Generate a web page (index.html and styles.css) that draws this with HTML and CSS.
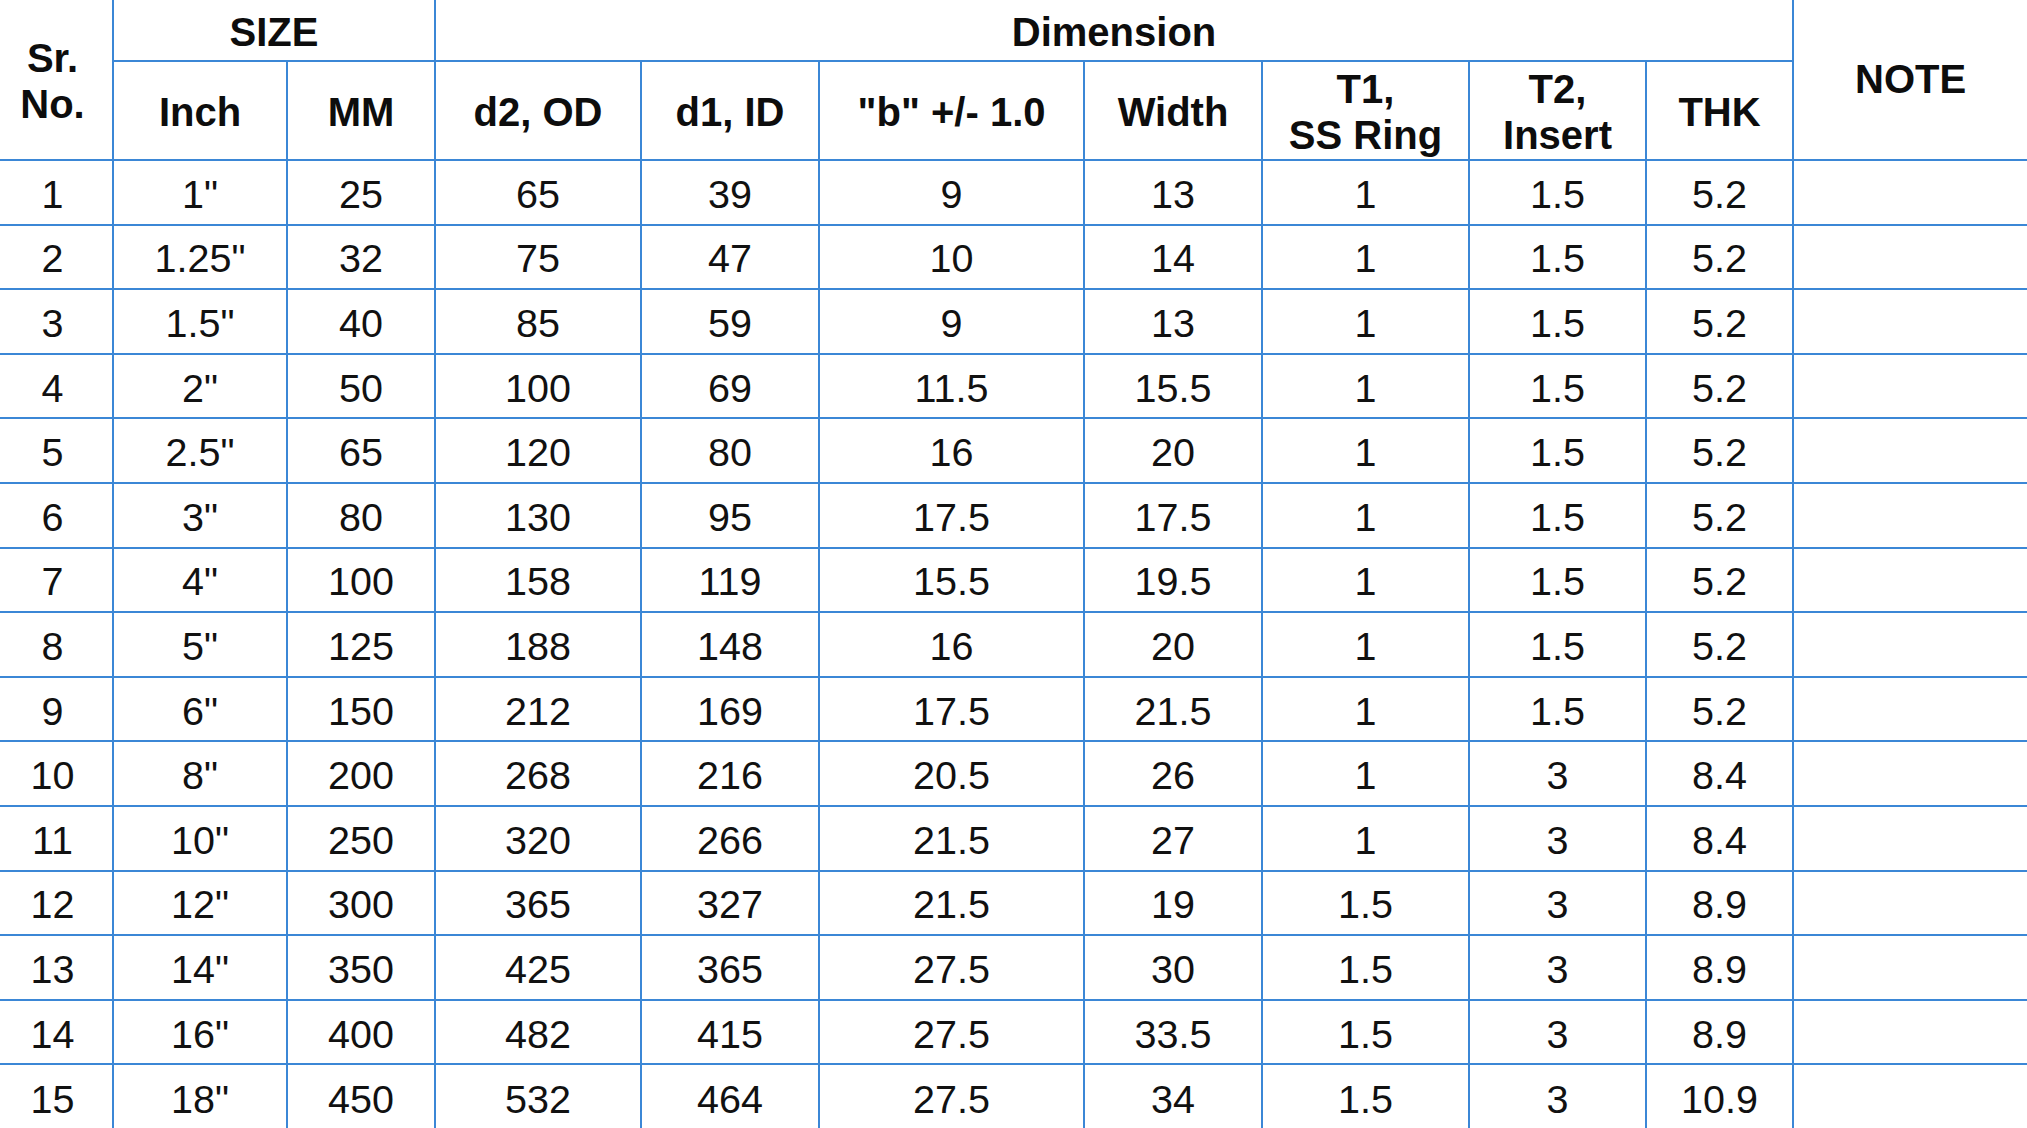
FILE: index.html
```html
<!DOCTYPE html>
<html lang="en">
<head>
<meta charset="utf-8">
<title>Gasket Dimension Table</title>
<link rel="stylesheet" href="styles.css">
</head>
<body>
<table class="spec">
  <colgroup>
    <col class="c-sr">
    <col class="c-inch">
    <col class="c-mm">
    <col class="c-d2">
    <col class="c-d1">
    <col class="c-b">
    <col class="c-width">
    <col class="c-t1">
    <col class="c-t2">
    <col class="c-thk">
    <col class="c-note">
  </colgroup>
  <thead>
    <tr class="h-top">
      <th rowspan="2" class="sr">Sr.<br>No.</th>
      <th colspan="2">SIZE</th>
      <th colspan="7">Dimension</th>
      <th rowspan="2" class="note">NOTE</th>
    </tr>
    <tr class="h-sub">
      <th>Inch</th>
      <th>MM</th>
      <th>d2, OD</th>
      <th>d1, ID</th>
      <th>&quot;b&quot; +/- 1.0</th>
      <th>Width</th>
      <th>T1,<br>SS Ring</th>
      <th>T2,<br>Insert</th>
      <th>THK</th>
    </tr>
  </thead>
  <tbody>
    <tr><td class="sr">1</td><td>1&quot;</td><td>25</td><td>65</td><td>39</td><td>9</td><td>13</td><td>1</td><td>1.5</td><td>5.2</td><td></td></tr>
    <tr><td class="sr">2</td><td>1.25&quot;</td><td>32</td><td>75</td><td>47</td><td>10</td><td>14</td><td>1</td><td>1.5</td><td>5.2</td><td></td></tr>
    <tr><td class="sr">3</td><td>1.5&quot;</td><td>40</td><td>85</td><td>59</td><td>9</td><td>13</td><td>1</td><td>1.5</td><td>5.2</td><td></td></tr>
    <tr><td class="sr">4</td><td>2&quot;</td><td>50</td><td>100</td><td>69</td><td>11.5</td><td>15.5</td><td>1</td><td>1.5</td><td>5.2</td><td></td></tr>
    <tr><td class="sr">5</td><td>2.5&quot;</td><td>65</td><td>120</td><td>80</td><td>16</td><td>20</td><td>1</td><td>1.5</td><td>5.2</td><td></td></tr>
    <tr><td class="sr">6</td><td>3&quot;</td><td>80</td><td>130</td><td>95</td><td>17.5</td><td>17.5</td><td>1</td><td>1.5</td><td>5.2</td><td></td></tr>
    <tr><td class="sr">7</td><td>4&quot;</td><td>100</td><td>158</td><td>119</td><td>15.5</td><td>19.5</td><td>1</td><td>1.5</td><td>5.2</td><td></td></tr>
    <tr><td class="sr">8</td><td>5&quot;</td><td>125</td><td>188</td><td>148</td><td>16</td><td>20</td><td>1</td><td>1.5</td><td>5.2</td><td></td></tr>
    <tr><td class="sr">9</td><td>6&quot;</td><td>150</td><td>212</td><td>169</td><td>17.5</td><td>21.5</td><td>1</td><td>1.5</td><td>5.2</td><td></td></tr>
    <tr><td class="sr">10</td><td>8&quot;</td><td>200</td><td>268</td><td>216</td><td>20.5</td><td>26</td><td>1</td><td>3</td><td>8.4</td><td></td></tr>
    <tr><td class="sr">11</td><td>10&quot;</td><td>250</td><td>320</td><td>266</td><td>21.5</td><td>27</td><td>1</td><td>3</td><td>8.4</td><td></td></tr>
    <tr><td class="sr">12</td><td>12&quot;</td><td>300</td><td>365</td><td>327</td><td>21.5</td><td>19</td><td>1.5</td><td>3</td><td>8.9</td><td></td></tr>
    <tr><td class="sr">13</td><td>14&quot;</td><td>350</td><td>425</td><td>365</td><td>27.5</td><td>30</td><td>1.5</td><td>3</td><td>8.9</td><td></td></tr>
    <tr><td class="sr">14</td><td>16&quot;</td><td>400</td><td>482</td><td>415</td><td>27.5</td><td>33.5</td><td>1.5</td><td>3</td><td>8.9</td><td></td></tr>
    <tr><td class="sr">15</td><td>18&quot;</td><td>450</td><td>532</td><td>464</td><td>27.5</td><td>34</td><td>1.5</td><td>3</td><td>10.9</td><td></td></tr>
  </tbody>
</table>
</body>
</html>
```
FILE: styles.css
```css
html, body {
  margin: 0;
  padding: 0;
  background: #ffffff;
  overflow: hidden;
}

.spec {
  width: 2027px;
  border-collapse: collapse;
  border-style: hidden;
  table-layout: fixed;
  font-family: "Liberation Sans", Arial, Helvetica, sans-serif;
  color: #111111;
}

.c-sr { width: 113px; }
.c-inch { width: 174px; }
.c-mm { width: 148px; }
.c-d2 { width: 206px; }
.c-d1 { width: 178px; }
.c-b { width: 265px; }
.c-width { width: 178px; }
.c-t1 { width: 207px; }
.c-t2 { width: 177px; }
.c-thk { width: 147px; }
.c-note { width: 234px; }

.spec th,
.spec td {
  border: 2px solid #3b87d6;
  padding: 3px 0 0 0;
  text-align: center;
  vertical-align: middle;
}

.spec th {
  font-size: 40px;
  font-weight: bold;
  line-height: 46px;
  color: #0d0d0d;
}

.spec .sr {
  padding-right: 7px;
}

.spec .note {
  padding-bottom: 4px;
}

.h-top {
  height: 61px;
}

.h-sub {
  height: 99px;
}

.spec tbody tr {
  height: 64.6px;
}

.spec td {
  font-size: 39.5px;
  line-height: 44px;
  font-weight: normal;
}
```
